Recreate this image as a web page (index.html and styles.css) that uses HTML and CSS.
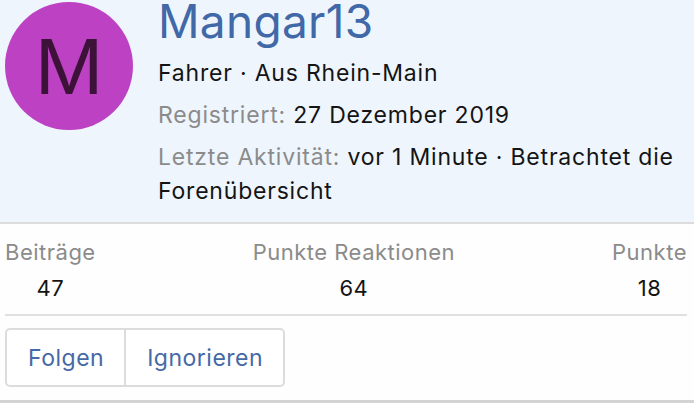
FILE: index.html
```
<!DOCTYPE html>
<html lang="de">
<head>
<meta charset="utf-8">
<link rel="stylesheet" href="styles.css">
</head>
<body>
<div class="card">
  <div class="header">
    <div class="avatar"><span>M</span></div>
    <div class="info">
      <h1 class="name">Mangar13</h1>
      <p class="line">Fahrer · Aus Rhein-Main</p>
      <p class="line"><span class="muted">Registriert:</span> 27 Dezember 2019</p>
      <p class="line"><span class="muted">Letzte Aktivität:</span> vor 1 Minute · Betrachtet die Forenübersicht</p>
    </div>
  </div>
  <div class="stats">
    <dl class="stat"><dt>Beiträge</dt><dd>47</dd></dl>
    <dl class="stat"><dt>Punkte Reaktionen</dt><dd>64</dd></dl>
    <dl class="stat"><dt>Punkte</dt><dd>18</dd></dl>
  </div>
  <div class="actions">
    <div class="btn-group">
      <a class="btn">Folgen</a>
      <a class="btn">Ignorieren</a>
    </div>
  </div>
  <div class="next"></div>
</div>
</body>
</html>
```
FILE: styles.css
```
html, body {
  margin: 0;
  padding: 0;
  background: #fefefe;
}
body {
  font-family: Inter, "Liberation Sans", sans-serif;
  color: #141414;
  width: 694px;
  height: 403px;
  overflow: hidden;
  letter-spacing: 0.5px;
}
.header {
  display: flex;
  background: #eef5fd;
  border-bottom: 2px solid #dcdcdc;
  height: 224px;
  box-sizing: border-box;
}
.avatar {
  width: 128px;
  height: 128px;
  border-radius: 50%;
  background: #bd42c3;
  margin: 2px 0 0 5px;
  flex: none;
  display: flex;
  align-items: center;
  justify-content: center;
}
.avatar span {
  font-size: 76px;
  color: #3c1239;
  line-height: 1;
  letter-spacing: 0;
}
.info {
  margin-left: 25px;
  padding-right: 8px;
}
.name {
  margin: 0 0 14px;
  font-size: 46px;
  font-weight: 400;
  color: #4168a7;
  line-height: 42px;
  letter-spacing: 0.3px;
}
.line {
  margin: 8px 0 0;
  font-size: 23px;
  line-height: 34px;
  letter-spacing: 0.8px;
}
.muted {
  color: #8b8b8b;
}
.stats {
  display: flex;
  justify-content: space-between;
  margin: 0 7px 0 5px;
  padding: 14px 0 14px;
  border-bottom: 2px solid #e0e0e0;
}
.stat {
  margin: 0;
  text-align: center;
}
.stat dt {
  color: #8b8b8b;
  font-size: 22px;
  line-height: 28px;
}
.stat dd {
  margin: 10px 0 0;
  font-size: 22px;
  line-height: 24px;
}
.actions {
  padding: 12px 5px 0;
}
.btn-group {
  display: inline-flex;
  border: 2px solid #dcdcdc;
  border-radius: 5px;
  height: 59px;
  box-sizing: border-box;
  background: #fff;
}
.btn {
  display: flex;
  align-items: center;
  padding: 0 20px 0 21px;
  font-size: 23px;
  color: #4569a6;
}
.btn + .btn {
  border-left: 2px solid #dcdcdc;
}
.next {
  margin-top: 13px;
  border-top: 3px solid #d3d3d3;
}
```
